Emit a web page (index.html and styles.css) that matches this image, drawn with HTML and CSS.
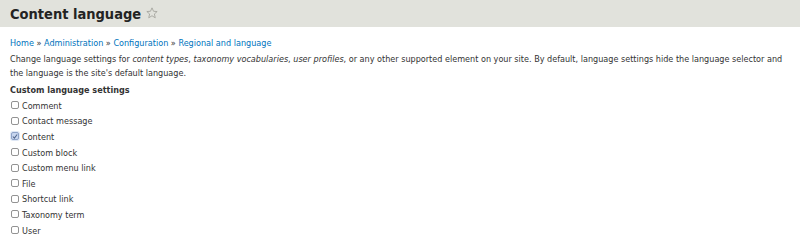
FILE: index.html
```html
<!DOCTYPE html>
<html lang="en">
<head>
    <meta charset="UTF-8">
    <title>Content language</title>
    <link rel="stylesheet" href="styles.css">
</head>
<body>
    <div class="page-header">
        <h1 class="page-title">Content language</h1>
        <svg class="shortcut" width="12" height="12" viewBox="0 0 14 14">
            <path d="M7 1 L8.8 5 L13 5.3 L9.8 8.1 L10.8 12.6 L7 10.2 L3.2 12.6 L4.2 8.1 L1 5.3 L5.2 5 Z" fill="none" stroke="#a3a39c" stroke-width="1" stroke-linejoin="round"/>
        </svg>
    </div>

    <div class="content">
        <nav class="breadcrumb">
            <a href="#">Home</a> » <a href="#">Administration</a> » <a href="#">Configuration</a> » <a href="#">Regional and language</a>
        </nav>

        <p class="description">Change language settings for <em>content types</em>, <em>taxonomy vocabularies</em>, <em>user profiles</em>, or any other supported element on your site. By default, language settings hide the language selector and the language is the site's default language.</p>

        <div class="settings">
            <h2 class="settings-title">Custom language settings</h2>
            <label class="option"><span class="box"></span>Comment</label>
            <label class="option"><span class="box"></span>Contact message</label>
            <label class="option"><span class="box checked"><svg width="7" height="7" viewBox="0 0 7 7"><path d="M1 3.5 L2.8 5.4 L6 1.2" fill="none" stroke="#50648a" stroke-width="1.2"/></svg></span>Content</label>
            <label class="option"><span class="box"></span>Custom block</label>
            <label class="option"><span class="box"></span>Custom menu link</label>
            <label class="option"><span class="box"></span>File</label>
            <label class="option"><span class="box"></span>Shortcut link</label>
            <label class="option"><span class="box"></span>Taxonomy term</label>
            <label class="option"><span class="box"></span>User</label>
        </div>
    </div>
</body>
</html>
```

FILE: styles.css
```css
body {
    margin: 0;
    font-family: "DejaVu Sans Condensed", "DejaVu Sans", sans-serif;
    font-stretch: condensed;
    font-size: 9px;
    color: #333;
    background: #fff;
}

.page-header {
    display: flex;
    align-items: center;
    height: 27px;
    padding-left: 10px;
    background: #e1e2dc;
}

.page-title {
    margin: 0;
    font-size: 14.5px;
    font-weight: bold;
    color: #232323;
}

.shortcut {
    margin-left: 5px;
    margin-top: -1px;
}

.content {
    padding: 9px 10px 0;
}

.breadcrumb {
    line-height: 14px;
}

.breadcrumb a {
    color: #0074bd;
    text-decoration: none;
}

.description {
    margin: 2px 0 0;
    line-height: 14px;
}

.settings {
    margin-top: 3px;
}

.settings-title {
    margin: 0 0 1px;
    font-size: 9px;
    font-weight: bold;
    line-height: 14px;
}

.option {
    display: flex;
    align-items: center;
    height: 15.6px;
}

.box {
    display: inline-flex;
    align-items: center;
    justify-content: center;
    box-sizing: border-box;
    width: 8px;
    height: 8px;
    margin: -1px 3px 0 1px;
    border: 1px solid #939393;
    border-radius: 2px;
    background: #fff;
}

.box.checked {
    border-color: #8ea3c8;
    background: #c8d6ef;
    box-shadow: 0 0 0 1px #dfe7f5;
}
```
